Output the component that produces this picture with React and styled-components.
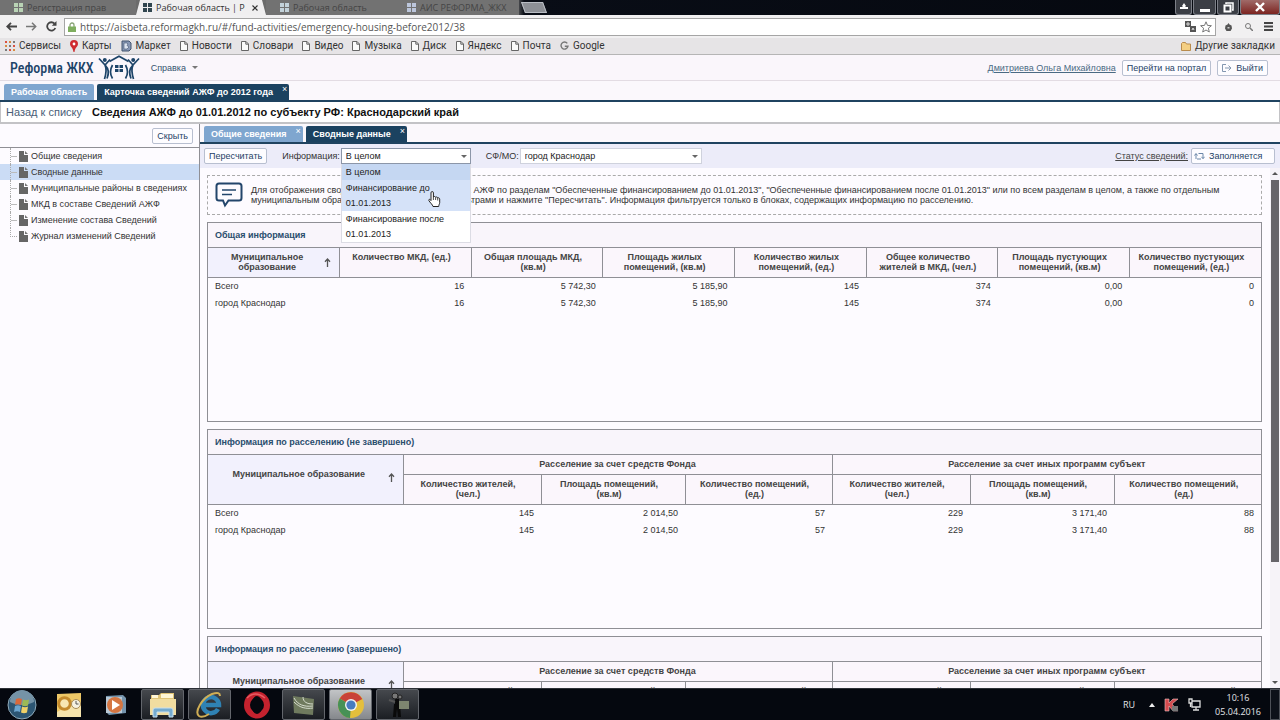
import React from 'react';
import styled, { createGlobalStyle, css } from 'styled-components';

const GlobalStyle = createGlobalStyle`
  * {
    box-sizing: border-box;
  }

  body {
    margin: 0;
    background: #fdfbff;
    color: #333;
    font-family: 'Liberation Sans', Arial, sans-serif;
    font-size: 9px;
    line-height: 10px;
    overflow: hidden;
  }

  button,
  input,
  select {
    font-family: inherit;
    font-size: inherit;
    line-height: inherit;
    margin: 0;
  }

  svg {
    flex-shrink: 0;
  }
`;

const bookmarks = [
  { name: 'Сервисы', icon: 'apps' },
  { name: 'Карты', icon: 'pin' },
  { name: 'Маркет', icon: 'market' },
  { name: 'Новости', icon: 'page' },
  { name: 'Словари', icon: 'page' },
  { name: 'Видео', icon: 'page' },
  { name: 'Музыка', icon: 'page' },
  { name: 'Диск', icon: 'page' },
  { name: 'Яндекс', icon: 'page' },
  { name: 'Почта', icon: 'page' },
  { name: 'Google', icon: 'google' },
];

const treeItems = [
  'Общие сведения',
  'Сводные данные',
  'Муниципальные районы в сведениях',
  'МКД в составе Сведений АЖФ',
  'Изменение состава Сведений',
  'Журнал изменений Сведений',
];

const totalColumns = [
  'Количество МКД, (ед.)',
  'Общая площадь МКД, (кв.м)',
  'Площадь жилых помещений, (кв.м)',
  'Количество жилых помещений, (ед.)',
  'Общее количество жителей в МКД, (чел.)',
  'Площадь пустующих помещений, (кв.м)',
  'Количество пустующих помещений, (ед.)',
];
const totalValues = ['16', '5 742,30', '5 185,90', '145', '374', '0,00', '0'];
const movedColumns = [
  ['Количество жителей,', '(чел.)'],
  ['Площадь помещений,', '(кв.м)'],
  ['Количество помещений,', '(ед.)'],
];
const movedValues = ['145', '2 014,50', '57', '229', '3 171,40', '88'];
const movedWidths = [195, 138, 144, 147, 138, 144, 147];

function BookmarkIcon({ icon }) {
  if (icon === 'apps') {
    const colors = ['#d9503f', '#d98a3f', '#7a7a7a'];
    return (
      <svg width="10" height="10" viewBox="0 0 10 10">
        {[0, 4, 8].map((y) =>
          [0, 4, 8].map((x, i) => (
            <rect key={`${x}-${y}`} x={x} y={y} width="2" height="2" fill={colors[(i + y / 4) % 3]} />
          ))
        )}
      </svg>
    );
  }
  if (icon === 'pin') {
    return (
      <svg width="8" height="12" viewBox="0 0 8 12">
        <path d="M4 0a4 4 0 0 1 4 4c0 2.400-3 3.500-3.500 8h-1C3 7.500 0 6.400 0 4a4 4 0 0 1 4-4z" fill="#cf2a2f" />
        <circle cx="4" cy="4" r="1.400" fill="#fff" />
      </svg>
    );
  }
  if (icon === 'market') {
    return (
      <svg width="11" height="12" viewBox="0 0 11 12">
        <path d="M1 1h7l2 2v6l-2 2H1z" fill="#8797b5" stroke="#43546f" />
        <path d="M3 3v6h3l2-2-2-1.500L7 4 6 3z" fill="#dbe3f0" stroke="#43546f" strokeWidth=".6" />
      </svg>
    );
  }
  if (icon === 'google') {
    return (
      <svg width="9" height="10" viewBox="0 0 9 10">
        <path d="M7.300 2.400A3.500 3.500 0 1 0 8 5.200H4.800" fill="none" stroke="#777" strokeWidth="1.400" />
      </svg>
    );
  }
  return (
    <svg width="8" height="10" viewBox="0 0 8 10">
      <path d="M.5.5h4.500L7.500 3v6.500h-7zM4.800.500V3.200h2.700" fill="#fafafa" stroke="#666" />
    </svg>
  );
}

function TabIcon({ color }) {
  return (
    <svg width="9" height="9" viewBox="0 0 9 9" fill={color}>
      <path d="M0 0h4v4H0zM5 0h4v4H5zM0 5h4v4H0zM5 5h4v4H5z" />
    </svg>
  );
}

function LogoHouse() {
  return (
    <svg width="42" height="26" viewBox="0 0 42 26" fill="none" stroke="#1d4468">
      <path d="M1 3.500l6 6.500c2 4 1 9-.5 14M7.500 9.500l4.500-5M7.500 10.500c3 3 3.500 8 1.500 13" strokeWidth="1.700" />
      <path d="M41 3.500L35 10c-2 4-1 9 .5 14M34.500 9.500L30 4.500M34.500 10.500c-3 3-3.500 8-1.500 13" strokeWidth="1.700" />
      <circle cx="6.800" cy="5" r="2" fill="#1d4468" stroke="none" />
      <circle cx="35.200" cy="5" r="2" fill="#1d4468" stroke="none" />
      <path d="M11.500 6.500L21 1.200l9.500 5.300M14.500 23.500c-2.500-4-2.500-9 0-13.500M27.500 23.500c2.500-4 2.500-9 0-13.500" strokeWidth="1.700" />
      <path d="M17 10h3.500v3H17zM21.500 10H25v3h-3.500zM17 14h3.500v3H17zM21.500 14H25v3h-3.500z" fill="#1d4468" stroke="none" />
    </svg>
  );
}

function SortArrow() {
  return (
    <svg width="7" height="9" viewBox="0 0 7 9" fill="none" stroke="#555">
      <path d="M3.500 9V1M1 3.800L3.500 1 6 3.800" strokeWidth="1.300" />
    </svg>
  );
}

function BrowserChrome() {
  return (
    <header>
      <TabStrip>
        <BrowserTab $width={136}>
          <TabIcon color="#b9d3b5" />
          <span>Регистрация прав</span>
        </BrowserTab>
        <BrowserTab $width={130} $active>
          <TabIcon color="#31464f" />
          <span>Рабочая область | Р</span>
          <TabClose type="button" aria-label="Закрыть вкладку">
            <svg width="6" height="6" viewBox="0 0 6 6" stroke="#333">
              <path d="M.5.5l5 5M5.500.5l-5 5" strokeWidth="1.200" />
            </svg>
          </TabClose>
        </BrowserTab>
        <BrowserTab $width={127}>
          <TabIcon color="#c3d2da" />
          <span>Рабочая область</span>
        </BrowserTab>
        <BrowserTab $width={126}>
          <TabIcon color="#bcc6dc" />
          <span>АИС РЕФОРМА_ЖКХ</span>
        </BrowserTab>
        <NewTab type="button" aria-label="Новая вкладка" />
        <WindowButtons>
          <WindowButton type="button" aria-label="Пользователь" $width={17}>
            <svg width="8" height="8" viewBox="0 0 8 8" fill="#fff">
              <path d="M4 0l2 3-1 1h3v2H0V4h3L2 3z" />
            </svg>
          </WindowButton>
          <WindowButton type="button" aria-label="Свернуть" $width={23}>
            <svg width="12" height="12" viewBox="0 0 12 12">
              <path d="M1 8h10v3H1z" fill="#fff" />
            </svg>
          </WindowButton>
          <WindowButton type="button" aria-label="Развернуть" $width={22}>
            <svg width="11" height="11" viewBox="0 0 11 11" fill="none" stroke="#fff">
              <path d="M3 2V1h7v7H9" strokeWidth="1.500" />
              <path d="M1.500 3.500h6v6h-6z" strokeWidth="2" />
            </svg>
          </WindowButton>
          <WindowButton type="button" aria-label="Закрыть" $width={40} $close>
            <svg width="10" height="10" viewBox="0 0 10 10" stroke="#fff">
              <path d="M1 1l8 8M9 1L1 9" strokeWidth="2.400" />
            </svg>
          </WindowButton>
        </WindowButtons>
      </TabStrip>
      <AddressRow>
        <ChromeButton type="button" aria-label="Назад">
          <svg width="11" height="9" viewBox="0 0 11 9" fill="none" stroke="#444">
            <path d="M11 4.500H1.500M5 .8L1.300 4.500 5 8.200" strokeWidth="1.800" />
          </svg>
        </ChromeButton>
        <ChromeButton type="button" aria-label="Вперёд">
          <svg width="11" height="9" viewBox="0 0 11 9" fill="none" stroke="#777">
            <path d="M0 4.500h9.500M6 .8l3.700 3.700L6 8.200" strokeWidth="1.500" />
          </svg>
        </ChromeButton>
        <ChromeButton type="button" aria-label="Обновить">
          <svg width="11" height="11" viewBox="0 0 11 11" fill="none" stroke="#444">
            <path d="M9.300 7A4.200 4.200 0 1 1 8.500 2.600" strokeWidth="1.800" />
            <path d="M10.500 0v4.800H5.800z" fill="#444" stroke="none" />
          </svg>
        </ChromeButton>
        <AddressBox>
          <svg width="8" height="10" viewBox="0 0 8 10">
            <path d="M2 5V3a2 2 0 0 1 4 0v2" fill="none" stroke="#8aa579" strokeWidth="1.300" />
            <path d="M0 4.500h8V10H0z" fill="#7fae5f" />
          </svg>
          <AddressInput
            aria-label="Адрес"
            defaultValue="https://aisbeta.reformagkh.ru/#/fund-activities/emergency-housing-before2012/38"
          />
          <svg width="11" height="11" viewBox="0 0 11 11">
            <path d="M0 0h6v6H0zM5 5h6v6H5z" fill="#555" />
            <path d="M2 2h2v2H2zM7 9l1-2 1 2" fill="none" stroke="#ddd" />
          </svg>
          <svg width="12" height="12" viewBox="0 0 12 12">
            <path d="M6 .8l1.500 3.600 3.900.300-3 2.500.9 3.800L6 9l-3.300 2 .9-3.800-3-2.500 3.900-.3z" fill="#fff" stroke="#777" />
          </svg>
        </AddressBox>
        <ChromeButton type="button" aria-label="Расширение">
          <svg width="7" height="8" viewBox="0 0 7 8" fill="#555">
            <path d="M3.500 0l1 1.500 2 1 .5 3L5.500 8h-4L0 5.500l.5-3 2-1z" />
            <path d="M2.500 4h2v1.500h-2z" fill="#ccc" />
          </svg>
        </ChromeButton>
        <ChromeButton type="button" aria-label="Поиск">
          <svg width="8" height="8" viewBox="0 0 8 8" fill="none" stroke="#777">
            <circle cx="3" cy="3" r="2.500" />
            <path d="M5 5l3 3" strokeWidth="1.500" />
          </svg>
        </ChromeButton>
        <ChromeButton type="button" aria-label="Меню">
          <svg width="9" height="9" viewBox="0 0 9 9" fill="#444">
            <path d="M0 0h9v2H0zM0 3.500h9v2H0zM0 7h9v2H0z" />
          </svg>
        </ChromeButton>
      </AddressRow>
      <BookmarkBar>
        {bookmarks.map(({ name, icon }) => (
          <Bookmark key={name} href="#">
            <BookmarkIcon icon={icon} />
            {name}
          </Bookmark>
        ))}
        <Bookmark href="#" $last>
          <svg width="10" height="9" viewBox="0 0 10 9">
            <path d="M.5 1.500l1-1h3l1 1.500h4v6.500h-9z" fill="#f4cf83" stroke="#b98b4d" />
          </svg>
          Другие закладки
        </Bookmark>
      </BookmarkBar>
    </header>
  );
}

function SortTh({ children, ...rest }) {
  return (
    <Th $sorted {...rest}>
      <SortCell>
        <span>{children}</span>
        <SortArrow />
      </SortCell>
    </Th>
  );
}

function TotalPanel() {
  return (
    <Panel>
      <PanelTitle>Общая информация</PanelTitle>
      <Table>
        <thead>
          <tr>
            <SortTh>
              Муниципальное
              <br />
              образование
            </SortTh>
            {totalColumns.map((column) => (
              <Th key={column}>{column}</Th>
            ))}
          </tr>
        </thead>
        <tbody>
          {['Всего', 'город Краснодар'].map((name) => (
            <tr key={name}>
              <Td $name>{name}</Td>
              {totalValues.map((value, i) => (
                <Td key={totalColumns[i]}>{value}</Td>
              ))}
            </tr>
          ))}
        </tbody>
      </Table>
    </Panel>
  );
}

function MovedPanel({ title }) {
  return (
    <Panel>
      <PanelTitle>{title}</PanelTitle>
      <Table>
        <colgroup>
          {movedWidths.map((width, i) => (
            <Col key={i} $width={width} />
          ))}
        </colgroup>
        <thead>
          <tr>
            <SortTh rowSpan={2}>Муниципальное образование</SortTh>
            <Th colSpan={3} $group>Расселение за счет средств Фонда</Th>
            <Th colSpan={3} $group>Расселение за счет иных программ субъект</Th>
          </tr>
          <tr>
            {[...movedColumns, ...movedColumns].map(([label, unit], i) => (
              <Th key={i}>
                {label}
                <br />
                {unit}
              </Th>
            ))}
          </tr>
        </thead>
        <tbody>
          {['Всего', 'город Краснодар'].map((name) => (
            <tr key={name}>
              <Td $name>{name}</Td>
              {movedValues.map((value, i) => (
                <Td key={i}>{value}</Td>
              ))}
            </tr>
          ))}
        </tbody>
      </Table>
    </Panel>
  );
}

function Sidebar() {
  return (
    <Aside>
      <AsideTop>
        <Button type="button">Скрыть</Button>
      </AsideTop>
      <Tree>
        {treeItems.map((item) => (
          <TreeItem key={item} $active={item === 'Сводные данные'}>
            <a href="#">
              <svg width="9" height="11" viewBox="0 0 9 11">
                <path d="M0 0h5v4h4v7H0z" fill="#666" />
                <path d="M6 0l3 3H6z" fill="#777" />
              </svg>
              {item}
            </a>
          </TreeItem>
        ))}
      </Tree>
    </Aside>
  );
}

function FilterBar() {
  return (
    <Filters>
      <Button type="button">Пересчитать</Button>
      <FilterLabel htmlFor="info">Информация:</FilterLabel>
      <SelectBox $width={130} $open>
        <select id="info" defaultValue="all">
          <option value="all">В целом</option>
          <option value="before">Финансирование до 01.01.2013</option>
          <option value="after">Финансирование после 01.01.2013</option>
        </select>
        <Menu role="listbox" aria-label="Информация">
          <MenuItem role="option" $state="selected">В целом</MenuItem>
          <MenuItem role="option" $state="hover">Финансирование до 01.01.2013</MenuItem>
          <MenuItem role="option">Финансирование после 01.01.2013</MenuItem>
          <Pointer width="13" height="17" viewBox="0 0 13 17">
            <path
              d="M3 9.500V1.800a1.200 1.200 0 0 1 2.400 0V6c.5-.8 2-.7 2.200.3.700-.6 1.900-.3 2.100.6.900-.4 2 .1 2 1.200v3.600c0 1-.9 2-1 3.800H5c-.3-1.700-3-4-4.100-5.900C.3 8.200 1.900 7.800 3 9.500z"
              fill="#fff"
              stroke="#222"
            />
            <path d="M5.400 6v3M7.600 6.500V9M9.700 7v2.500" stroke="#222" strokeWidth=".8" />
          </Pointer>
        </Menu>
      </SelectBox>
      <FilterLabel htmlFor="region">СФ/МО:</FilterLabel>
      <SelectBox $width={182}>
        <select id="region">
          <option>город Краснодар</option>
        </select>
      </SelectBox>
      <StatusLink href="#">Статус сведений:</StatusLink>
      <Button type="button" $wide>
        <svg width="11" height="8" viewBox="0 0 11 8" fill="none" stroke="#6b87a8">
          <path d="M2 7V2M.5 3.500L2 1.500l1.500 2M4.500 1.500H9V6M7.500 4.800L9 6.800l1.500-2M3 7h4" />
        </svg>
        Заполняется
      </Button>
    </Filters>
  );
}

function Taskbar() {
  return (
    <Bar>
      <Task type="button" aria-label="Пуск">
        <svg width="30" height="30" viewBox="0 0 30 30">
          <circle cx="15" cy="15" r="14" fill="#2c5572" stroke="#8fa9b8" />
          <path d="M3 12a12 12 0 0 1 24 0c-8 4-16 4-24 0z" fill="#7593a6" />
          <path d="M9 9c2-1 4-1 6 0l-1 6c-2-1-4-1-6 0z" fill="#d9683a" />
          <path d="M16 9.500c2 1 4 1 6 0l-1 6c-2 1-4 1-6 0z" fill="#9cb955" />
          <path d="M8 16c2-1 4-1 6 0l-1 6c-2-1-4-1-6 0z" fill="#6ba5cf" />
          <path d="M15 16.500c2 1 4 1 6 0l-1 6c-2 1-4 1-6 0z" fill="#eed068" />
        </svg>
      </Task>
      <Task type="button" aria-label="Outlook">
        <svg width="26" height="26" viewBox="0 0 26 26">
          <path d="M1 2l24-1v24H1z" fill="#edc767" />
          <path d="M12 14h13v11H1v-5z" fill="#f5e3ac" />
          <circle cx="8.500" cy="11.500" r="5.800" fill="#f8e7b2" stroke="#c48a2c" strokeWidth="3" />
          <circle cx="20" cy="12" r="4.500" fill="#f5f1e2" stroke="#a98b55" />
          <path d="M20 9v3h2.500" fill="none" stroke="#555" />
        </svg>
      </Task>
      <Task type="button" aria-label="Проигрыватель">
        <svg width="22" height="22" viewBox="0 0 22 22">
          <path d="M1 2l17-1 3 3v15l-17 2-3-3z" fill="#7594ad" />
          <path d="M1 3h16v16H1z" fill="#b8c8d5" />
          <circle cx="10" cy="11" r="8" fill="#d57642" />
          <path d="M7 6l8 5-8 5z" fill="#fff" />
        </svg>
      </Task>
      <Task type="button" aria-label="Проводник" $open>
        <svg width="28" height="26" viewBox="0 0 28 26">
          <path d="M2 3h8l2-2h13v22H2z" fill="#e0c476" />
          <path d="M1 7h26v16H1z" fill="#f1dda0" />
          <path d="M3 3h6v3H3zM12 2h12v4H12z" fill="#fff6d5" />
          <path d="M4 25v-7q0-2 2-2h16q2 0 2 2v7h-4v-5H8v5z" fill="#75abcf" stroke="#c9e1ef" />
        </svg>
      </Task>
      <Task type="button" aria-label="Internet Explorer" $open>
        <svg width="30" height="28" viewBox="0 0 30 28" fill="none">
          <path d="M23 18a8 8 0 1 1 1-4H9" stroke="#2f82b4" strokeWidth="4.500" />
          <path d="M4 25c-5-4 3-18 13-22 6-2 8-1 8 2M4 25c3 2 7 0 10-2" stroke="#cfae55" strokeWidth="2" />
        </svg>
      </Task>
      <Task type="button" aria-label="Opera">
        <svg width="28" height="28" viewBox="0 0 28 28">
          <ellipse cx="14" cy="14" rx="10" ry="10.500" fill="none" stroke="#c4222e" strokeWidth="6" />
          <ellipse cx="14" cy="14" rx="5.500" ry="9" fill="#05080e" />
          <path d="M4 7q8-8 18 0" fill="none" stroke="#e85b62" strokeWidth="1.500" />
        </svg>
      </Task>
      <Task type="button" aria-label="Программа" $open>
        <svg width="24" height="24" viewBox="0 0 24 24" fill="none">
          <path d="M1 3l21 3-1 16-19-2z" fill="#6f7a5e" />
          <path d="M2 5c4 7 10 9 19 8M2 9c6 6 12 7 19 6M11 4c0 5 4 7 10 7" stroke="#d8ded1" />
        </svg>
      </Task>
      <Task type="button" aria-label="Chrome" $open $active>
        <svg width="28" height="28" viewBox="0 0 28 28">
          <circle cx="14" cy="14" r="13" fill="#e4bf3c" />
          <path d="M14 14L2.700 7.500A13 13 0 0 1 25.300 8z" fill="#c94238" />
          <path d="M14 14L2.700 7.500A13 13 0 0 0 13 27z" fill="#479156" />
          <circle cx="14" cy="14" r="6" fill="#f3f3f3" />
          <circle cx="14" cy="14" r="4.600" fill="#477bc0" />
        </svg>
      </Task>
      <Task type="button" aria-label="Запись экрана" $open>
        <svg width="24" height="26" viewBox="0 0 24 26">
          <path d="M9 7h4v5H9zM8 12h6l1 13h-3l-1-8-1 8H7z" fill="#0a0a0a" />
          <circle cx="9" cy="4" r="3" fill="#777" stroke="#222" />
          <circle cx="14" cy="5" r="2" fill="#777" stroke="#222" />
          <path d="M13 9h10v8H13z" fill="#7d8570" />
          <path d="M3 8l6 2" stroke="#555" strokeWidth="2" />
        </svg>
      </Task>
      <Tray>
        <Language>RU</Language>
        <svg width="6" height="4" viewBox="0 0 6 4">
          <path d="M3 0l3 4H0z" fill="#eee" />
        </svg>
        <svg width="15" height="14" viewBox="0 0 15 14">
          <path d="M1 1h4v4l4-4h5L8 6l6 7H9L5 8v5H1z" fill="#d34b4f" stroke="#eec3c3" strokeWidth=".6" />
          <path d="M8 8h6v5H8z" fill="#777" />
        </svg>
        <svg width="13" height="13" viewBox="0 0 13 13" fill="none" stroke="#ddd">
          <path d="M4 3h8v6H4zM8 9v3M5 12h6M1 1h3v4H1zM2.500 5v4" strokeWidth="1.300" />
        </svg>
        <Clock>
          <span>10:16</span>
          <span>05.04.2016</span>
        </Clock>
        <ShowDesktop type="button" aria-label="Показать рабочий стол" />
      </Tray>
    </Bar>
  );
}

function App() {
  return (
    <Page>
      <GlobalStyle />
      <BrowserChrome />
      <SiteHeader>
        <Logo href="#">
          <span>Реформа ЖКХ</span>
          <LogoHouse />
        </Logo>
        <HelpButton type="button">Справка</HelpButton>
        <UserLink href="#">Дмитриева Ольга Михайловна</UserLink>
        <Button type="button">Перейти на портал</Button>
        <Button type="button">
          <svg width="10" height="8" viewBox="0 0 10 8" fill="none" stroke="#8397b0">
            <path d="M4 .5H.5v7H4M3 4h6M6.500 1.500L9 4 6.500 6.500" />
          </svg>
          Выйти
        </Button>
      </SiteHeader>
      <Tabs $top>
        <Tab type="button">Рабочая область</Tab>
        <Tab type="button" $active>
          Карточка сведений АЖФ до 2012 года
          <i>×</i>
        </Tab>
      </Tabs>
      <TitleRow>
        <a href="#">Назад к списку</a>
        <h1>Сведения АЖФ до 01.01.2012 по субъекту РФ: Краснодарский край</h1>
      </TitleRow>
      <Body>
        <Sidebar />
        <Content>
          <Tabs>
            <Tab type="button">
              Общие сведения
              <i>×</i>
            </Tab>
            <Tab type="button" $active>
              Сводные данные
              <i>×</i>
            </Tab>
          </Tabs>
          <FilterBar />
          <ScrollArea>
            <Panels>
              <Notice>
                <svg width="28" height="26" viewBox="0 0 28 26" fill="none" stroke="#22456b">
                  <path d="M4 1.500h20q2.500 0 2.500 2.500v12q0 2.500-2.500 2.500H13.500L10 23.500 8 18.500H4Q1.500 18.500 1.500 16V4Q1.500 1.500 4 1.500z" strokeWidth="2" />
                  <path d="M7 8h14M7 12.500h10" strokeWidth="1.500" />
                </svg>
                <p>
                  Для отображения сводной информации об объектах АЖФ по разделам "Обеспеченные
                  финансированием до 01.01.2013", "Обеспеченные финансированием после 01.01.2013" или
                  по всем разделам в целом, а также по отдельным
                  <br />
                  муниципальным образованиям, задайте отбор фильтрами и нажмите "Пересчитать".
                  Информация фильтруется только в блоках, содержащих информацию по расселению.
                </p>
              </Notice>
              <TotalPanel />
              <MovedPanel title="Информация по расселению (не завершено)" />
              <MovedPanel title="Информация по расселению (завершено)" />
            </Panels>
            <Scrollbar>
              <svg width="6" height="4" viewBox="0 0 6 4">
                <path d="M3 0l3 3H0z" fill="#555" />
              </svg>
              <ScrollTrack>
                <ScrollThumb />
              </ScrollTrack>
              <svg width="6" height="4" viewBox="0 0 6 4">
                <path d="M3 4L0 1h6z" fill="#555" />
              </svg>
            </Scrollbar>
          </ScrollArea>
        </Content>
      </Body>
      <Taskbar />
    </Page>
  );
}

const Page = styled.div`
  display: flex;
  flex-direction: column;
  height: 100vh;
`;

const TabStrip = styled.div`
  display: flex;
  height: 15px;
  background: linear-gradient(90deg, #6b6b6b 0, #6b6b6b 516px, #090d16 524px, #05080f 100%);
`;

const BrowserTab = styled.div`
  display: flex;
  align-items: center;
  gap: 4px;
  width: ${({ $width }) => $width}px;
  padding: 0 8px 0 14px;
  color: #454545;
  background: #727272;
  font-family: 'Open Sans', sans-serif;
  font-size: 9px;
  line-height: 13px;
  white-space: nowrap;

  ${({ $active }) =>
    $active &&
    css`
      color: #333;
      background: #f0eff0;
      padding-left: 7px;
      clip-path: polygon(4px 0, calc(100% - 4px) 0, 100% 100%, 0 100%);
    `}
`;

const TabClose = styled.button`
  display: grid;
  place-items: center;
  border: 0;
  padding: 0;
  margin-left: auto;
  background: none;
`;

const NewTab = styled.button`
  width: 22px;
  height: 11px;
  margin: 2px 4px;
  border: 1px solid #b9bdc4;
  background: #8d9096;
  transform: skewX(20deg);
`;

const WindowButtons = styled.div`
  display: flex;
  gap: 1px;
  margin-left: auto;
`;

const WindowButton = styled.button`
  display: grid;
  place-items: center;
  width: ${({ $width }) => $width}px;
  padding: 0;
  border: 1px solid #7d8088;
  border-top: 0;
  border-radius: 0 0 3px 3px;
  background: ${({ $close }) => ($close ? 'linear-gradient(#a06a68, #7c2420)' : '#3b3e45')};
`;

const AddressRow = styled.div`
  display: flex;
  align-items: center;
  gap: 5px;
  height: 23px;
  padding: 0 4px;
  background: #f1f0f1;
`;

const ChromeButton = styled.button`
  display: grid;
  place-items: center;
  width: 15px;
  height: 15px;
  padding: 0;
  border: 0;
  background: none;
`;

const AddressBox = styled.div`
  display: flex;
  flex: 1;
  align-items: center;
  gap: 4px;
  height: 18px;
  padding: 0 3px;
  border: 1px solid #a5a5a5;
  background: #fff;
`;

const AddressInput = styled.input`
  flex: 1;
  padding: 0;
  border: 0;
  outline: 0;
  color: #555;
  background: none;
  && {
    font-family: 'Open Sans', sans-serif;
    font-size: 10px;
    line-height: 14px;
  }
`;

const BookmarkBar = styled.nav`
  display: flex;
  align-items: center;
  gap: 9px;
  height: 17px;
  padding: 0 5px;
  border-bottom: 1px solid #b5b5b5;
  background: #e6e4e6;
`;

const Bookmark = styled.a`
  display: flex;
  align-items: center;
  gap: 4px;
  margin-left: ${({ $last }) => ($last ? 'auto' : '0')};
  color: #333;
  font-family: Roboto, sans-serif;
  font-size: 10px;
  text-decoration: none;
  white-space: nowrap;
`;

const SiteHeader = styled.header`
  display: flex;
  align-items: center;
  gap: 6px;
  height: 26px;
  padding: 0 12px 0 10px;
  border-bottom: 1px solid #e3dce3;
  background: #faf6fb;
`;

const Logo = styled.a`
  display: flex;
  align-items: center;
  gap: 4px;
  color: #1d4468;
  font-family: 'Roboto Condensed', Roboto, sans-serif;
  font-size: 14px;
  font-weight: 500;
  line-height: 24px;
  text-decoration: none;
  white-space: nowrap;
`;

const HelpButton = styled.button`
  display: flex;
  align-items: center;
  gap: 6px;
  margin-left: 5px;
  padding: 0;
  border: 0;
  color: #35546f;
  background: none;

  &::after {
    content: '';
    border: 3px solid transparent;
    border-top-color: #777;
    border-bottom: 0;
  }
`;

const UserLink = styled.a`
  margin-left: auto;
  color: #4a6a83;
`;

const Button = styled.button`
  display: flex;
  align-items: center;
  justify-content: ${({ $wide }) => ($wide ? 'flex-start' : 'center')};
  gap: 4px;
  width: ${({ $wide }) => ($wide ? '84px' : 'auto')};
  height: 16px;
  padding: 0 ${({ $wide }) => ($wide ? '2px' : '4px')};
  border: 1px solid #b8bfd0;
  border-radius: 2px;
  color: #1f4266;
  background: #fdfcff;
  white-space: nowrap;
`;

const Tabs = styled.div`
  display: flex;
  align-items: flex-end;
  gap: 3px;
  height: ${({ $top }) => ($top ? '21px' : '20px')};
  padding: 0 4px;
  border-bottom: 2px solid #1f4360;
  background: #fbf8fc;
`;

const Tab = styled.button`
  display: flex;
  height: 16px;
  padding: 3px 7px 0;
  border: 0;
  border-radius: 2px 2px 0 0;
  color: #fff;
  background: ${({ $active }) => ($active ? '#1b4260' : '#7fa6cf')};
  font-weight: bold;
  white-space: nowrap;

  i {
    margin: -3px -5px 0 9px;
    font-style: normal;
    font-weight: normal;
  }
`;

const TitleRow = styled.div`
  display: flex;
  align-items: center;
  gap: 10px;
  height: 22px;
  padding: 0 5px;
  border: 1px solid #c3c3c6;
  border-width: 0 1px 2px;
  background: #fff;

  a {
    color: #4a6078;
    font-size: 11px;
    text-decoration: none;
  }

  h1 {
    margin: 0;
    color: #111;
    font-size: 11px;
  }
`;

const Body = styled.div`
  display: flex;
  flex: 1;
  min-height: 0;
`;

const Aside = styled.aside`
  width: 200px;
  border-right: 1px solid #8f8f95;
  background: #fdfbff;
`;

const AsideTop = styled.div`
  display: flex;
  justify-content: flex-end;
  align-items: center;
  height: 24px;
  padding-right: 6px;
  border-bottom: 1px solid #8f8f95;
`;

const Tree = styled.ul`
  margin: 0;
  padding: 0;
  list-style: none;
`;

const TreeItem = styled.li`
  display: flex;
  height: 16px;
  padding-left: 10px;
  background: ${({ $active }) => ($active ? '#cbdcf5' : 'none')};

  &::before {
    content: '';
    width: 6px;
    height: 8px;
    margin-right: 2px;
    border: 1px dotted #aaa;
    border-width: 0 0 1px 1px;
  }

  &:not(:last-child)::before {
    height: 16px;
    border-bottom: 0;
    background: linear-gradient(#bbb, #bbb) 0 8px / 6px 1px no-repeat;
  }

  a {
    display: flex;
    align-items: center;
    gap: 3px;
    color: #333;
    text-decoration: none;
    white-space: nowrap;
  }
`;

const Content = styled.main`
  display: flex;
  flex: 1;
  flex-direction: column;
  min-width: 0;
`;

const Filters = styled.div`
  display: flex;
  align-items: center;
  height: 24px;
  padding: 0 5px 0 4px;
  background: #ececf9;
`;

const FilterLabel = styled.label`
  margin: 0 1px 0 15px;
`;

const SelectBox = styled.div`
  position: relative;
  width: ${({ $width }) => $width}px;

  select {
    width: 100%;
    height: 16px;
    padding: 0 4px;
    border: 1px solid ${({ $open }) => ($open ? '#8c96a8' : '#cfd2dd')};
    border-radius: 0;
    color: #222;
    background: #fff;
    appearance: none;
  }

  &::after {
    content: '';
    position: absolute;
    top: 7px;
    right: 4px;
    border: 3px solid transparent;
    border-top-color: #666;
    border-bottom: 0;
    pointer-events: none;
  }
`;

const Menu = styled.ul`
  position: absolute;
  z-index: 1;
  top: 16px;
  left: 0;
  right: 0;
  margin: 0;
  padding: 0;
  border: 1px solid #dcdce4;
  border-top: 0;
  background: #fff;
  list-style: none;
`;

const MenuItem = styled.li`
  padding: 1px 24px 0 4px;
  color: #222;
  background: ${({ $state }) =>
    ({ selected: '#c5d7f2', hover: '#d5e2f8' })[$state] || '#fff'};
  line-height: 15px;
`;

const Pointer = styled.svg`
  position: absolute;
  top: 27px;
  left: 86px;
`;

const StatusLink = styled.a`
  margin: 0 3px 0 auto;
  color: #444;
`;

const ScrollArea = styled.div`
  display: flex;
  flex: 1;
  min-height: 0;
  padding-left: 7px;
`;

const Panels = styled.div`
  display: flex;
  flex: 1;
  flex-direction: column;
  gap: 7px;
  min-width: 0;
  padding-top: 7px;
  overflow: hidden;
`;

const Notice = styled.div`
  display: flex;
  flex-shrink: 0;
  align-items: center;
  gap: 8px;
  height: 40px;
  padding: 0 7px;
  border: 1px dashed #aaa;
  white-space: nowrap;

  p {
    margin: 0;
  }
`;

const Panel = styled.section`
  flex-shrink: 0;
  min-height: 200px;
  border: 1px solid #8f8f95;
`;

const PanelTitle = styled.h2`
  margin: 0;
  padding: 7px;
  color: #294d6d;
  background: #f9f5fb;
  font-size: 9px;
`;

const Table = styled.table`
  width: 100%;
  border-collapse: collapse;
  table-layout: fixed;
`;

const Col = styled.col`
  width: ${({ $width }) => $width}px;
`;

const Th = styled.th`
  height: ${({ $group }) => ($group ? '20px' : '30px')};
  padding: ${({ $group }) => ($group ? '4px' : '4px 14px 4px 6px')};
  border: 1px solid #8f8f95;
  color: #444;
  background: ${({ $sorted }) => ($sorted ? '#f2f1fd' : '#fbf6fc')};
  vertical-align: top;

  &:first-child:not(tr + tr > &) {
    border-left: 0;
  }

  &:last-child {
    border-right: 0;
  }

  &[rowspan] {
    padding-top: 10px;
  }

  &[rowspan] svg {
    margin-top: 8px;
  }
`;

const SortCell = styled.div`
  display: flex;
  align-items: center;
  gap: 4px;
  margin-right: -6px;

  span {
    flex: 1;
  }
`;

const Td = styled.td`
  height: 17px;
  padding: 0 7px;
  text-align: ${({ $name }) => ($name ? 'left' : 'right')};
`;

const Scrollbar = styled.div`
  display: flex;
  flex-direction: column;
  align-items: center;
  gap: 4px;
  width: 10px;
  margin-left: 8px;
  padding: 4px 0;
  background: #f6f3f8;
`;

const ScrollTrack = styled.div`
  flex: 1;
  width: 8px;
`;

const ScrollThumb = styled.div`
  height: 77%;
  background: #666469;
`;

const Bar = styled.footer`
  display: flex;
  gap: 4px;
  height: 32px;
  border-top: 1px solid #2c2f36;
  background: #05080f;
`;

const Task = styled.button`
  display: grid;
  place-items: center;
  width: 43px;
  padding: 0;
  border: 1px solid ${({ $open }) => ($open ? '#63666c' : 'transparent')};
  border-radius: 2px;
  background: ${({ $open, $active }) => {
    if ($active) return 'linear-gradient(#c2c4c6, #85888c)';
    return $open ? 'linear-gradient(#45484d, #1b1e23)' : 'none';
  }};
`;

const Tray = styled.div`
  display: flex;
  align-items: center;
  gap: 9px;
  margin-left: auto;
  color: #e3e5e8;
  font-family: 'Open Sans', sans-serif;
`;

const Language = styled.span`
  margin-right: 5px;
`;

const Clock = styled.time`
  display: flex;
  flex-direction: column;
  align-items: center;
  gap: 4px;
  margin-left: 5px;
`;

const ShowDesktop = styled.button`
  align-self: stretch;
  width: 10px;
  padding: 0;
  border: 1px solid #4d5057;
  background: #0d1119;
`;

export default App;
